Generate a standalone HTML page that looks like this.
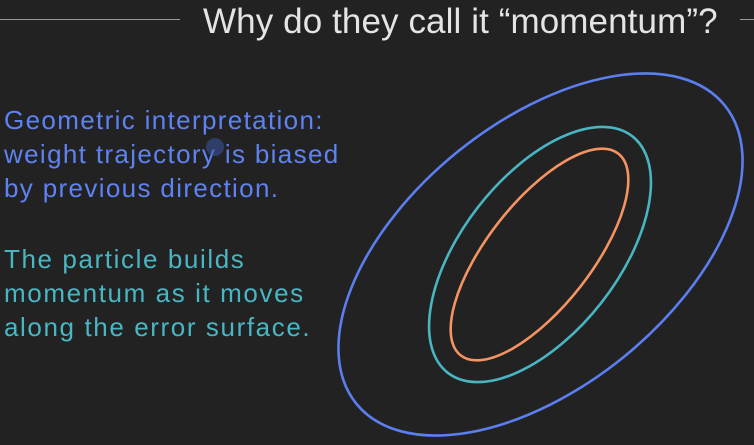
<!DOCTYPE html>
<html><head><meta charset="utf-8"><style>
html,body{margin:0;padding:0;background:#222222;overflow:hidden;}
body{width:754px;height:445px;position:relative;overflow:hidden;font-family:"Liberation Sans",sans-serif;}
.title{position:absolute;left:203px;top:2px;font-size:35px;color:#e4e4e4;font-weight:300;letter-spacing:0.1px;white-space:nowrap;}
.line{position:absolute;height:1px;background:#9a9a9a;top:19px;}
.t{position:absolute;left:4px;font-size:26px;line-height:34px;white-space:nowrap;}
.b{color:#5e82f2;top:103px;letter-spacing:1.35px;}
.c{color:#48b6c3;top:242px;letter-spacing:1.6px;}
svg{position:absolute;left:0;top:0;}
</style></head><body>
<div class="line" style="left:0;width:180px"></div>
<div class="line" style="left:740px;width:14px"></div>
<div class="title">Why do they call it “momentum”?</div>
<div class="t b">Geometric interpretation:<br>weight trajectory is biased<br>by previous direction.</div>
<div class="t c">The particle builds<br>momentum as it moves<br>along the error surface.</div>
<svg width="754" height="445">
<ellipse cx="540.5" cy="254.5" rx="237" ry="132" transform="rotate(-39 540.5 254.5)" fill="none" stroke="#5b7ef0" stroke-width="2.6"/>
<ellipse cx="540" cy="254.5" rx="150" ry="78" transform="rotate(-52 540 254.5)" fill="none" stroke="#49b5c1" stroke-width="2.6"/>
<ellipse cx="539.5" cy="254.5" rx="128" ry="52" transform="rotate(-52 539.5 254.5)" fill="none" stroke="#f59462" stroke-width="2.6"/>
<circle cx="215" cy="147" r="9" fill="#3a5ab0" opacity="0.5"/>
</svg>
</body></html>
